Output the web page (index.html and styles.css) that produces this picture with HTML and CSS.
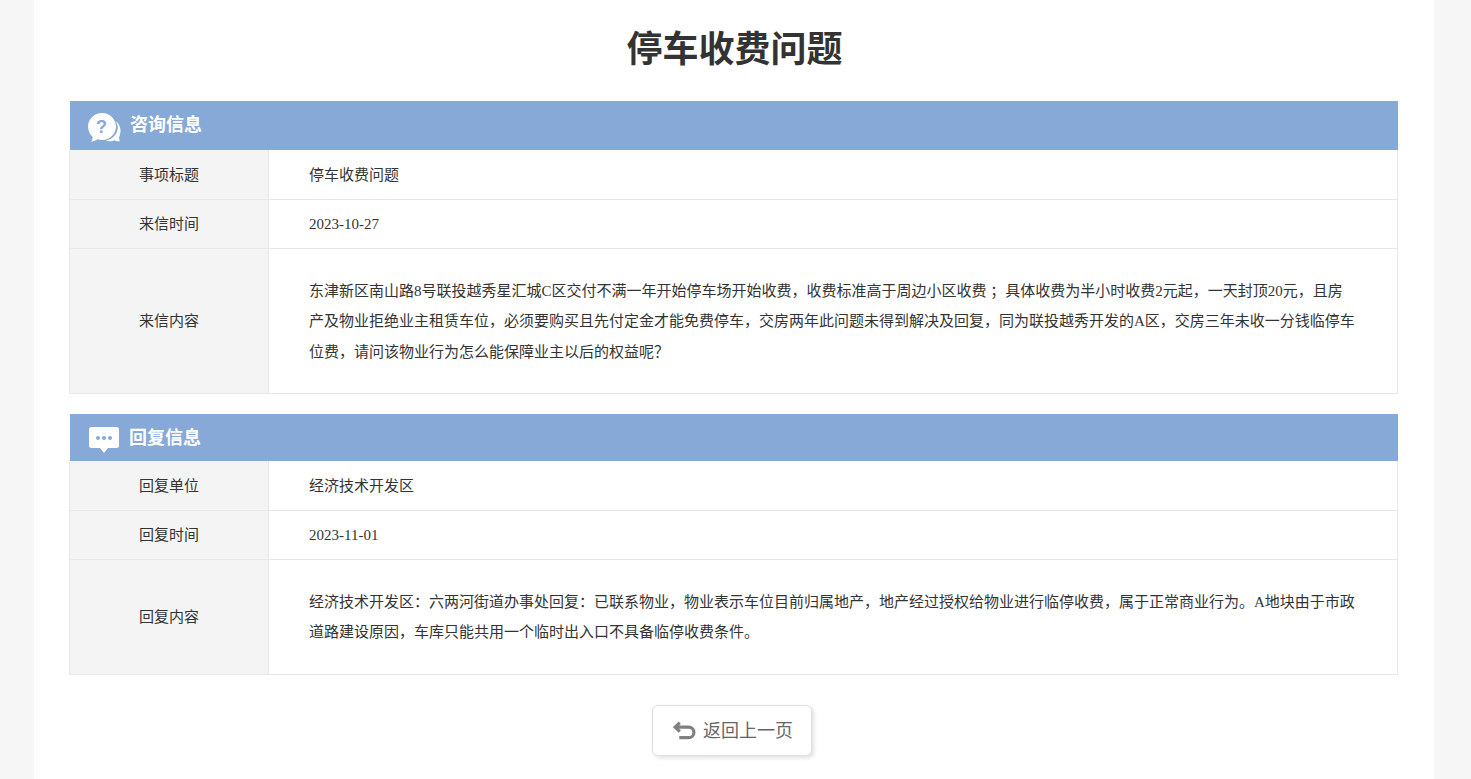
FILE: index.html
```html
<!DOCTYPE html>
<html lang="zh-CN">
<head>
<meta charset="utf-8">
<title>停车收费问题</title>
<link rel="stylesheet" href="styles.css">
</head>
<body>
<main class="page">
  <h1 class="title">停车收费问题</h1>

  <section class="section section-ask">
    <header class="bar bar-ask">
      <svg class="icon-ask" viewBox="0 0 33 29" aria-hidden="true">
        <path class="ic-w" d="M27.500 8c3 2.200 5 5.500 5 9.500 0 3-1 5.500-1.500 7.500l.8 3.300c-2 .3-3.800-.2-5-1-1.500.8-3 1-5 1-1.500 0-2.800-.2-4-.7 6-.8 11.500-5.500 12-12.500.2-2.500-.9-5-2.300-7.100z"/>
        <path class="ic-w" d="M14 0c7.700 0 14 6 14 13.500S21.700 27 14 27c-1.600 0-3.100-.2-4.500-.7-1.500 1.200-3.500 2.100-6.500 2.500 1-1.300 1.600-3 1.700-5C1.800 21.300 0 17.600 0 13.500 0 6 6.300 0 14 0z"/>
        <text class="ic-q" x="13.500" y="19.500" text-anchor="middle">?</text>
      </svg>
      <h2 class="bar-title">咨询信息</h2>
    </header>
    <div class="row row-first">
      <div class="label">事项标题</div>
      <div class="value">停车收费问题</div>
    </div>
    <div class="row row-date">
      <div class="label">来信时间</div>
      <div class="value">2023-10-27</div>
    </div>
    <div class="row row-ask-body">
      <div class="label">来信内容</div>
      <div class="value value-long">东津新区南山路8号联投越秀星汇城C区交付不满一年开始停车场开始收费，收费标准高于周边小区收费 ；具体收费为半小时收费2元起，一天封顶20元，且房产及物业拒绝业主租赁车位，必须要购买且先付定金才能免费停车，交房两年此问题未得到解决及回复，同为联投越秀开发的A区，交房三年未收一分钱临停车位费，请问该物业行为怎么能保障业主以后的权益呢？</div>
    </div>
  </section>

  <section class="section section-reply">
    <header class="bar bar-reply">
      <svg class="icon-reply" viewBox="0 0 30 27" aria-hidden="true">
        <path class="ic-w" d="M2.500 0h25A2.500 2.500 0 0 1 30 2.500v16a2.500 2.500 0 0 1-2.500 2.500H19l-4 5-4-5H2.500A2.500 2.500 0 0 1 0 18.500v-16A2.500 2.500 0 0 1 2.500 0z"/>
        <circle class="ic-d" cx="9" cy="11" r="2"/>
        <circle class="ic-d" cx="15" cy="11" r="2"/>
        <circle class="ic-d" cx="21" cy="11" r="2"/>
      </svg>
      <h2 class="bar-title">回复信息</h2>
    </header>
    <div class="row row-first">
      <div class="label">回复单位</div>
      <div class="value">经济技术开发区</div>
    </div>
    <div class="row row-date">
      <div class="label">回复时间</div>
      <div class="value">2023-11-01</div>
    </div>
    <div class="row row-reply-body">
      <div class="label">回复内容</div>
      <div class="value value-long">经济技术开发区：六两河街道办事处回复：已联系物业，物业表示车位目前归属地产，地产经过授权给物业进行临停收费，属于正常商业行为。A地块由于市政道路建设原因，车库只能共用一个临时出入口不具备临停收费条件。</div>
    </div>
  </section>

  <div class="actions">
    <a class="back" href="#">
      <svg class="icon-back" viewBox="0 0 22 18" aria-hidden="true">
        <path class="ic-back" d="M6.500 1.500 2 5.800l4.500 4.300M2.500 5.800H15a5 5 0 0 1 0 10H6"/>
      </svg>
      <span>返回上一页</span>
    </a>
  </div>
</main>
</body>
</html>
```

FILE: styles.css
```css
* { box-sizing: border-box; }

html, body { margin: 0; padding: 0; }

body {
  background: #f6f6f6;
  font-family: "Liberation Serif", "Noto Sans CJK SC", serif;
  color: #333;
  height: 779px;
  overflow: hidden;
}

.page {
  width: 1400px;
  height: 779px;
  margin-left: 34px;
  padding: 0 35px;
  background: #fff;
}

.title {
  margin: 0;
  padding-top: 25px;
  padding-left: 1px;
  height: 101px;
  font-size: 36px;
  line-height: 50px;
  font-weight: 700;
  text-align: center;
  color: #333;
}

.section { width: 1329px; }
.section-reply { margin-top: 20px; }

.bar {
  display: flex;
  align-items: center;
  margin-left: 1px;
  width: 1328px;
  background: #87a9d8;
  color: #fff;
}

.bar-ask { height: 49px; padding: 0 0 2px 18px; }
.bar-reply { height: 47px; padding-left: 19px; }

.bar-title {
  margin: 0;
  font-size: 18px;
  line-height: 24px;
  font-weight: 700;
  color: #fff;
}

.icon-ask { width: 33px; height: 29px; margin-right: 9px; margin-top: 6px; flex: none; }
.icon-reply { width: 30px; height: 27px; margin-right: 10px; margin-top: 5px; flex: none; }

.ic-w { fill: #fff; }
.ic-d { fill: #87a9d8; }
.ic-q {
  fill: #87a9d8;
  font-family: "Liberation Sans", sans-serif;
  font-size: 18px;
  font-weight: 700;
}

.row {
  display: flex;
  border: 1px solid #e8e8e8;
  border-top: 0;
  font-size: 15px;
  line-height: 20px;
}

.row-first { height: 50px; }
.row-date { height: 49px; }
.row-ask-body { height: 145px; }
.row-reply-body { height: 115px; }

.label {
  display: flex;
  align-items: center;
  justify-content: center;
  flex: none;
  width: 199px;
  background: #f4f4f4;
  border-right: 1px solid #e8e8e8;
  color: #333;
}

.value {
  display: flex;
  align-items: center;
  flex: 1;
  padding: 0 40px;
  color: #333;
}

.value-long { line-height: 30.4px; padding-top: .8px; }

.actions {
  display: flex;
  justify-content: center;
  padding-top: 30px;
  padding-right: 4px;
}

.back {
  display: flex;
  align-items: center;
  justify-content: center;
  width: 160px;
  height: 51px;
  padding-left: 2px;
  border: 1px solid #e0e0e0;
  border-radius: 6px;
  background: #fff;
  box-shadow: 2px 2px 4px rgba(0, 0, 0, .12);
  color: #666;
  font-size: 18px;
  line-height: 24px;
  text-decoration: none;
}

.icon-back { width: 23px; height: 19px; margin-right: 7px; flex: none; }

.ic-back {
  fill: none;
  stroke: #808080;
  stroke-width: 3;
}
```
